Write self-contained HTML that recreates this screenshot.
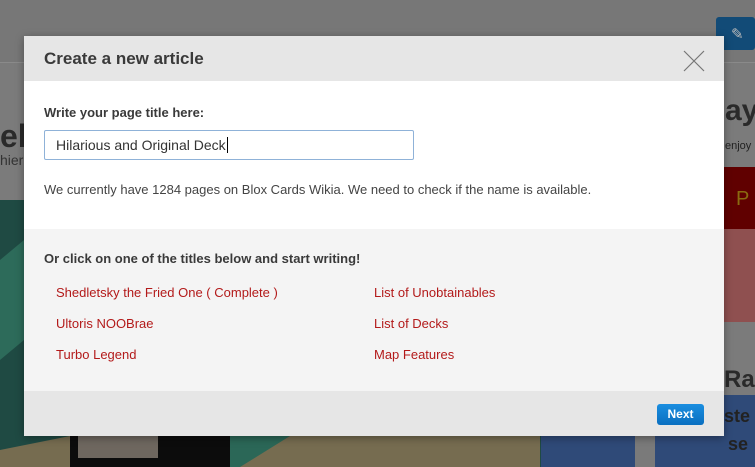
<!DOCTYPE html>
<html><head><meta charset="utf-8"><style>
*{margin:0;padding:0;box-sizing:border-box}
body{width:755px;height:467px;overflow:hidden;position:relative;background:#7b7b7b;font-family:"Liberation Sans",sans-serif}
.a{position:absolute}
.modal{left:24px;top:36px;width:700px;height:400px;box-shadow:0 2px 8px rgba(0,0,0,.35)}
.hd{left:0;top:0;width:700px;height:45px;background:#e6e6e6}
.hd h1{position:absolute;left:20px;top:13px;font-size:17px;font-weight:bold;color:#3a3a3a}
.bd{left:0;top:45px;width:700px;height:148px;background:#fff}
.gr{left:0;top:193px;width:700px;height:162px;background:#f4f4f4}
.ft{left:0;top:355px;width:700px;height:45px;background:#e6e6e6}
.lbl{font-size:13px;font-weight:bold;color:#3a3a3a}
.lnk{font-size:13px;color:#b31a1a}
</style></head><body>
<div class="a" style="left:0;top:0;width:755px;height:62px;background:#777"></div>
<div class="a" style="left:0;top:62px;width:755px;height:1px;background:#8a8a8a"></div>
<div class="a" style="left:716px;top:17px;width:39px;height:33px;background:#124b77;border-radius:3px"></div>
<div class="a" style="left:731px;top:25px;color:#bbb;font-size:15px">✎</div>
<div class="a" style="left:0;top:118px;font-size:32px;font-weight:bold;color:#2a2a2a">el</div>
<div class="a" style="left:0;top:152px;font-size:14px;color:#333">hier</div>
<div class="a" style="left:0;top:200px;width:541px;height:267px;background:#1f4a43"></div>
<svg class="a" style="left:0;top:200px" width="541" height="267"><polygon points="0,60 24,40 24,140 0,160" fill="#2d6b5a"/><polygon points="0,250 70,236 240,236 330,200 400,236 540,236 540,267 0,267" fill="#766c50"/><rect x="70" y="236" width="160" height="31" fill="#0c0c0c"/><rect x="78" y="236" width="80" height="22" fill="#6e675f"/><polygon points="230,236 290,236 240,267 230,267" fill="#2b6757"/></svg>
<div class="a" style="left:725px;top:94px;font-size:30px;font-weight:bold;color:#2a2a2a">ay</div>
<div class="a" style="left:725px;top:140px;font-size:11px;color:#222">enjoy</div>
<div class="a" style="left:724px;top:167px;width:31px;height:62px;background:#600000"></div>
<div class="a" style="left:736px;top:188px;font-size:20px;color:#8a6a10">P</div>
<div class="a" style="left:724px;top:229px;width:31px;height:93px;background:#8f5050"></div>
<div class="a" style="left:724px;top:366px;font-size:24px;font-weight:bold;color:#2a2a2a">Ra</div>
<div class="a" style="left:541px;top:395px;width:214px;height:72px;background:#2f4a78"></div>
<div class="a" style="left:635px;top:395px;width:20px;height:72px;background:#7a7a7a"></div>
<div class="a" style="left:724px;top:406px;font-size:18px;font-weight:bold;color:#222">ste</div>
<div class="a" style="left:728px;top:434px;font-size:18px;font-weight:bold;color:#222">se</div>
<div class="a modal">
 <div class="a hd"><h1>Create a new article</h1>
  <svg class="a" style="left:659px;top:14px" width="22" height="22"><path d="M1 1L21 21M21 1L1 21" stroke="#777" stroke-width="1.2"/></svg></div>
 <div class="a bd">
  <div class="a lbl" style="left:20px;top:24px">Write your page title here:</div>
  <div class="a" style="left:20px;top:49px;width:370px;height:30px;border:1px solid #8fb2d8;border-radius:2px;background:#fff"><span style="position:absolute;left:11px;top:6px;font-size:14px;color:#333">Hilarious and Original Deck<span style="border-left:1px solid #000;margin-left:1px"></span></span></div>
  <div class="a" style="left:20px;top:101px;font-size:13px;color:#444">We currently have 1284 pages on Blox Cards Wikia. We need to check if the name is available.</div>
 </div>
 <div class="a gr">
  <div class="a lbl" style="left:20px;top:22px">Or click on one of the titles below and start writing!</div>
  <div class="a lnk" style="left:32px;top:56px">Shedletsky the Fried One ( Complete )</div>
  <div class="a lnk" style="left:32px;top:87px">Ultoris NOOBrae</div>
  <div class="a lnk" style="left:32px;top:118px">Turbo Legend</div>
  <div class="a lnk" style="left:350px;top:56px">List of Unobtainables</div>
  <div class="a lnk" style="left:350px;top:87px">List of Decks</div>
  <div class="a lnk" style="left:350px;top:118px">Map Features</div>
 </div>
 <div class="a ft">
  <div class="a" style="left:633px;top:13px;width:47px;height:21px;background:linear-gradient(#1a8ee0,#0a6fc0);border-radius:3px;color:#fff;font-size:12px;font-weight:bold;text-align:center;line-height:21px">Next</div>
 </div>
</div>
</body></html>
